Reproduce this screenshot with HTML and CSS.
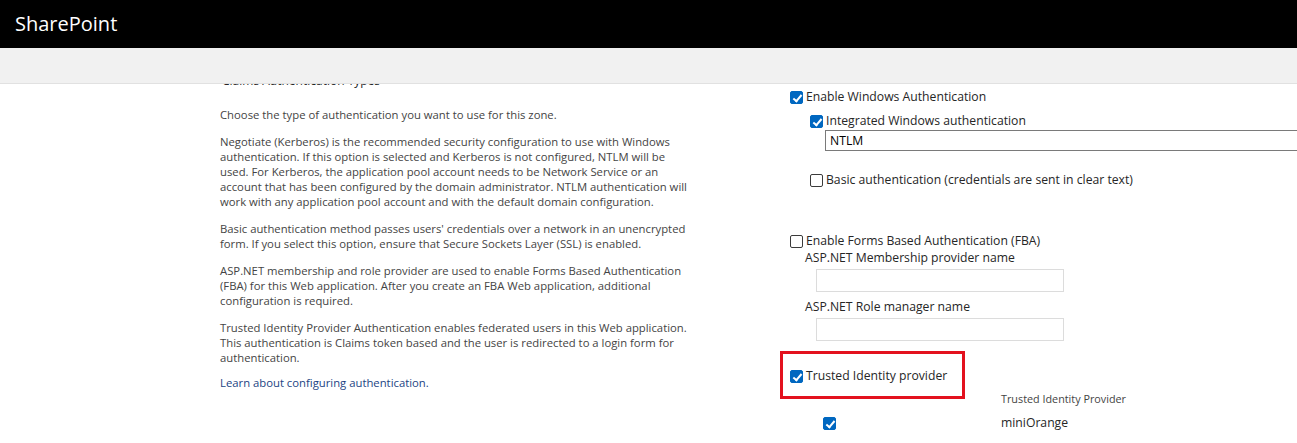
FILE: index.html
```html
<!DOCTYPE html>
<html lang="en">
<head>
<meta charset="utf-8">
<title>SharePoint - Authentication Providers</title>
<link rel="stylesheet" href="styles.css">
</head>
<body>
<header class="suitebar">
  <span class="brand">SharePoint</span>
</header>
<div class="ribbon"></div>
<main class="content">
  <section class="section">
    <div class="desc">
      <h3 class="title">Claims Authentication Types</h3>
      <p class="first">Choose the type of authentication you want to use for this zone.</p>
      <p>Negotiate (Kerberos) is the recommended security configuration to use with Windows authentication. If this option is selected and Kerberos is not configured, NTLM will be used. For Kerberos, the application pool account needs to be Network Service or an account that has been configured by the domain administrator. NTLM authentication will work with any application pool account and with the default domain configuration.</p>
      <p>Basic authentication method passes users' credentials over a network in an unencrypted form. If you select this option, ensure that Secure Sockets Layer (SSL) is enabled.</p>
      <p>ASP.NET membership and role provider are used to enable Forms Based Authentication (FBA) for this Web application. After you create an FBA Web application, additional configuration is required.</p>
      <p>Trusted Identity Provider Authentication enables federated users in this Web application. This authentication is Claims token based and the user is redirected to a login form for authentication.</p>
      <p><a class="link" href="#">Learn about configuring authentication.</a></p>
    </div>
    <div class="fields">
      <label class="check-row row-win"><span class="cb on"></span>Enable Windows Authentication</label>
      <label class="check-row indent row-iwa"><span class="cb on"></span>Integrated Windows authentication</label>
      <div class="select-box">NTLM</div>
      <label class="check-row indent row-basic"><span class="cb"></span>Basic authentication (credentials are sent in clear text)</label>
      <label class="check-row row-fba"><span class="cb"></span>Enable Forms Based Authentication (FBA)</label>
      <div class="sub-label">ASP.NET Membership provider name</div>
      <div class="text-input"></div>
      <div class="sub-label role">ASP.NET Role manager name</div>
      <div class="text-input"></div>
      <div class="trusted-wrap">
        <label class="check-row row-trusted"><span class="cb on"></span>Trusted Identity provider</label>
        <span class="highlight"></span>
      </div>
      <div class="tip-table">
        <div class="tip-head">
          <span class="tip-col-check"></span>
          <span class="tip-col-name small">Trusted Identity Provider</span>
        </div>
        <div class="tip-row">
          <span class="tip-col-check"><span class="cb on"></span></span>
          <span class="tip-col-name">miniOrange</span>
        </div>
      </div>
    </div>
  </section>
</main>
</body>
</html>
```

FILE: styles.css
```css
* { box-sizing: border-box; }

html, body {
  margin: 0;
  padding: 0;
  background: #fff;
  height: 100%;
  overflow: hidden;
}

body {
  font-family: "Open Sans", "Noto Sans", sans-serif;
  color: #262626;
}

.suitebar {
  height: 48px;
  background: #000;
  display: flex;
  align-items: center;
  padding-left: 15px;
}

.brand {
  color: #fff;
  font-size: 20px;
  line-height: 24px;
  letter-spacing: 0;
}

.ribbon {
  height: 36px;
  background: #f1f1f1;
  border-bottom: 1px solid #e1e1e1;
}

.content {
  height: calc(100% - 84px);
  overflow: hidden;
}

.section {
  display: flex;
  padding-left: 220px;
}

.desc {
  width: 475px;
  flex: none;
  font-size: 11.3px;
  line-height: 15px;
  color: #444;
}

.title {
  margin: -11px 0 0 2px;
  font-size: 12px;
  line-height: 16px;
  font-weight: normal;
  color: #262626;
}

.desc p {
  margin: 12px 0 0;
}

.desc p.first {
  margin-top: 18px;
}

.desc p:last-child {
  margin-top: 10px;
}

.link {
  color: #1c4483;
  text-decoration: none;
}

.fields {
  margin-left: 95px;
  flex: 1;
  font-size: 12.2px;
  line-height: 18px;
  min-width: 0;
}

.check-row {
  display: flex;
  align-items: center;
  white-space: nowrap;
}

.cb {
  width: 13px;
  height: 13px;
  border: 1px solid #3b3b3b;
  border-radius: 2px;
  background: #fff;
  margin-right: 3px;
  flex: none;
  position: relative;
}

.cb.on {
  background: #0067c0;
  border-color: #0067c0;
}

.cb.on::after {
  content: "";
  position: absolute;
  left: 3.5px;
  top: 1px;
  width: 3px;
  height: 7px;
  border: solid #fff;
  border-width: 0 2px 2px 0;
  transform: rotate(40deg);
}

.indent { margin-left: 20px; }

.row-win { margin-top: 4px; }
.row-iwa { margin-top: 6px; }

.select-box {
  margin-left: 35px;
  height: 21px;
  border: 1px solid #7a7a7a;
  padding-left: 4px;
  line-height: 19px;
  width: 600px;
  font-size: 12.2px;
  color: #000;
}

.row-basic { margin-top: 20px; }
.row-fba { margin-top: 43px; }

.sub-label {
  margin-left: 15px;
  margin-top: -1px;
}

.sub-label.role { margin-top: 6px; }

.text-input {
  margin-left: 26px;
  margin-top: 2px;
  width: 248px;
  height: 23px;
  border: 1px solid #dcdcdc;
  background: #fff;
}

.trusted-wrap {
  position: relative;
  margin-top: 26px;
}

.highlight {
  position: absolute;
  left: -10px;
  top: -16px;
  width: 185px;
  height: 48px;
  border: 3px solid #e3111e;
  pointer-events: none;
}

.tip-table {
  margin-top: 6px;
}

.tip-head, .tip-row {
  display: flex;
  align-items: center;
}

.tip-col-check {
  width: 211px;
  display: flex;
  justify-content: flex-end;
  padding-right: 165px;
}

.tip-col-check .cb { margin-right: 0; }

.tip-col-name.small {
  font-size: 10.8px;
  line-height: 16px;
  color: #444;
}

.tip-row {
  margin-top: 7px;
}
```
